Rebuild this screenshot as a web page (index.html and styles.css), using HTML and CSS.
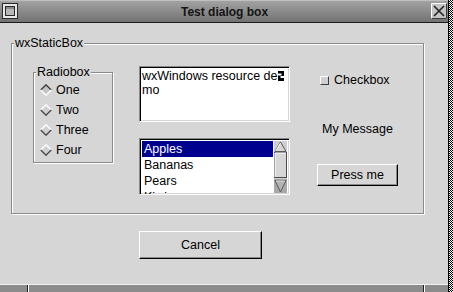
FILE: index.html
```html
<!DOCTYPE html>
<html lang="en">
<head>
  <meta charset="UTF-8" />
  <title>Test dialog box</title>
  <link rel="stylesheet" href="styles.css">
</head>
<body>

  <div class="screen">
    <div class="window">
      <div class="titlebar">
        <svg class="win-icon" width="16" height="16" viewBox="0 0 16 16">
          <rect x="0.5" y="0.5" width="15" height="15" fill="#e8e8e8" stroke="#2a2a2a"/>
          <rect x="3.5" y="3.5" width="9" height="9" fill="#b8b8b8" stroke="#2a2a2a"/>
          <rect x="4" y="4" width="8" height="2" fill="#8a8a8a"/>
        </svg>
        <div class="title">Test dialog box</div>
        <svg class="close" width="16" height="16" viewBox="0 0 16 16">
          <rect x="0" y="0" width="16" height="16" fill="#c4c4c4"/>
          <path d="M0.5 15.5V0.5h15" fill="none" stroke="#fff"/>
          <path d="M15.5 0.5v15H0.5" fill="none" stroke="#3a3a3a"/>
          <path d="M3 3l10 10M13 3L3 13" stroke="#222" stroke-width="1.6"/>
        </svg>
      </div>

      <div class="client">
        <div class="group staticbox">
          <span class="group-label">wxStaticBox</span>
          <div class="controls">

            <div class="group radiobox">
              <span class="group-label">Radiobox</span>
              <div class="radio checked"><svg width="12" height="12" viewBox="0 0 12 12"><path d="M6 1.5L10.5 6 6 10.5 1.5 6z" fill="#c4c4c4"/><path d="M0.8 6L6 0.8 11.2 6" fill="none" stroke="#3c3c3c" stroke-width="1.4"/><path d="M0.8 6L6 11.2 11.2 6" fill="none" stroke="#fff" stroke-width="1.4"/></svg>One</div>
              <div class="radio"><svg width="12" height="12" viewBox="0 0 12 12"><path d="M6 1.5L10.5 6 6 10.5 1.5 6z" fill="#d0d0d0"/><path d="M0.8 6L6 0.8 11.2 6" fill="none" stroke="#fff" stroke-width="1.4"/><path d="M0.8 6L6 11.2 11.2 6" fill="none" stroke="#4a4a4a" stroke-width="1.4"/></svg>Two</div>
              <div class="radio"><svg width="12" height="12" viewBox="0 0 12 12"><path d="M6 1.5L10.5 6 6 10.5 1.5 6z" fill="#d0d0d0"/><path d="M0.8 6L6 0.8 11.2 6" fill="none" stroke="#fff" stroke-width="1.4"/><path d="M0.8 6L6 11.2 11.2 6" fill="none" stroke="#4a4a4a" stroke-width="1.4"/></svg>Three</div>
              <div class="radio"><svg width="12" height="12" viewBox="0 0 12 12"><path d="M6 1.5L10.5 6 6 10.5 1.5 6z" fill="#d0d0d0"/><path d="M0.8 6L6 0.8 11.2 6" fill="none" stroke="#fff" stroke-width="1.4"/><path d="M0.8 6L6 11.2 11.2 6" fill="none" stroke="#4a4a4a" stroke-width="1.4"/></svg>Four</div>
            </div>

            <div class="middle">
              <div class="sunken textbox">
                <div>wxWindows resource de<svg class="caret" width="6" height="10" viewBox="0 0 6 10"><path d="M0 0h6v5H2.5v2H6v3H0V4.5h3.5V2.5H0z" fill="#000"/></svg></div>
                <div>mo</div>
              </div>
              <div class="sunken listbox">
                <div class="rows">
                  <div class="row selected">Apples</div>
                  <div class="row">Bananas</div>
                  <div class="row">Pears</div>
                  <div class="row">Kiwi</div>
                </div>
                <svg class="scrollbar" width="13" height="52" viewBox="0 0 13 52">
                  <rect x="0" y="0" width="13" height="52" fill="#cfcfcf"/>
                  <path d="M6.5 1L12 10.5H1z" fill="#d6d6d6" stroke="#5a5a5a"/>
                  <path d="M1.8 10L6.5 2" stroke="#fff"/>
                  <rect x="0.5" y="11.5" width="12" height="25" fill="#d6d6d6" stroke="#4a4a4a"/>
                  <path d="M1 36V12h11" fill="none" stroke="#fff"/>
                  <rect x="0" y="38" width="13" height="14" fill="#a9a9a9"/>
                  <path d="M1 39.5h11L6.5 51z" fill="#b4b4b4" stroke="#5a5a5a"/>
                  <path d="M2 40h9" stroke="#e6e6e6"/>
                </svg>
              </div>
            </div>

            <div class="right">
              <div class="checkbox"><span class="check-box"></span>Checkbox</div>
              <div class="message">My Message</div>
              <button class="btn press">Press me</button>
            </div>

          </div>
        </div>

        <div class="actions">
          <button class="btn cancel">Cancel</button>
        </div>
      </div>

      <div class="frame-bottom">
        <div class="frame-seg first"></div>
        <div class="frame-seg mid"></div>
        <div class="frame-seg last"></div>
      </div>
    </div>
    <div class="edge"></div>
  </div>

</body>
</html>
```

FILE: styles.css
```css
html, body {
  margin: 0;
  padding: 0;
  background: #d6d6d6;
  font-family: 'Liberation Sans', Arial, sans-serif;
  font-size: 12.5px;
  color: #000;
  overflow: hidden;
}

.screen {
  display: flex;
  width: 453px;
  height: 292px;
}

.window {
  width: 449px;
  height: 292px;
  display: flex;
  flex-direction: column;
  border-right: 1px solid #000;
  box-sizing: border-box;
}

.edge {
  width: 4px;
  height: 292px;
  background: repeating-conic-gradient(#000 0 25%, #fff 0 50%) 0 0 / 2px 2px;
}

/* title bar */

.titlebar {
  height: 23px;
  box-sizing: border-box;
  border-bottom: 1px solid #1c1c1c;
  border-top: 1px solid #c0c0c0;
  background: linear-gradient(#a2a2a2, #727272);
  display: flex;
  align-items: center;
  padding: 0 1px 0 2px;
}

.win-icon, .close {
  flex: none;
  margin-top: -1px;
}

.title {
  flex: 1;
  text-align: center;
  font-weight: bold;
  font-size: 12px;
  color: #141414;
}

/* client area */

.client {
  flex: 1;
  padding: 20px 0 0 11px;
  box-sizing: border-box;
}

.group {
  position: relative;
  border: 1px solid #8a8a8a;
  box-shadow: inset 1px 1px 0 #fff, 1px 1px 0 #fff;
  box-sizing: border-box;
}

.group-label {
  position: absolute;
  top: -8px;
  left: 2px;
  padding: 0 1px;
  line-height: 15px;
  background: #d6d6d6;
}

.staticbox {
  width: 413px;
  height: 171px;
  padding: 22px 0 0 21px;
}

.controls {
  display: flex;
  align-items: flex-start;
}

.radiobox {
  width: 80px;
  margin-top: 6px;
  padding: 7px 0 2px 0;
}

.radio {
  height: 20px;
  display: flex;
  align-items: center;
  gap: 4px;
  padding-left: 6px;
}

.radio svg {
  flex: none;
}

.middle {
  width: 151px;
  margin-left: 26px;
  display: flex;
  flex-direction: column;
  gap: 16px;
}

.sunken {
  background: #fff;
  border: 1px solid;
  border-color: #8a8a8a #fff #fff #8a8a8a;
  box-shadow: inset 1px 1px 0 #000, inset -1px -1px 0 #d6d6d6;
  box-sizing: border-box;
}

.textbox {
  height: 56px;
  padding: 2px 0 0 2px;
  line-height: 14px;
  white-space: nowrap;
}

.caret {
  margin-left: 1px;
  vertical-align: -1px;
}

.listbox {
  height: 57px;
  padding: 1px;
  display: flex;
  overflow: hidden;
}

.rows {
  flex: 1;
  height: 53px;
  overflow: hidden;
  padding: 1px 0 0 1px;
}

.row {
  height: 16px;
  line-height: 16px;
  padding-left: 2px;
}

.row.selected {
  background: #00008f;
  color: #fff;
}

.scrollbar {
  flex: none;
  margin: 1px 1px 0 1px;
}

.right {
  margin-left: 27px;
  display: flex;
  flex-direction: column;
  align-items: flex-start;
}

.checkbox {
  display: flex;
  align-items: center;
  gap: 5px;
  line-height: 15px;
  margin: 7px 0 0 3px;
}

.check-box {
  width: 9px;
  height: 9px;
  box-sizing: border-box;
  border: 1px solid;
  border-color: #fff #3c3c3c #3c3c3c #fff;
  background: #d0d0d0;
}

.message {
  line-height: 15px;
  margin: 34px 0 0 5px;
}

.btn {
  font-family: inherit;
  font-size: 12.5px;
  color: #000;
  background: #d6d6d6;
  border: 1px solid;
  border-color: #fff #000 #000 #fff;
  box-shadow: inset -1px -1px 0 #8a8a8a;
  padding: 0;
  border-radius: 0;
}

.press {
  width: 81px;
  height: 22px;
  margin-top: 27px;
}

.actions {
  display: flex;
  padding: 17px 0 0 128px;
}

.cancel {
  width: 123px;
  height: 28px;
}

/* bottom frame */

.frame-bottom {
  height: 8px;
  display: flex;
  border-top: 1px solid #f0f0f0;
  background: #8c8c8c;
  box-sizing: border-box;
}

.frame-seg.first {
  width: 27px;
}

.frame-seg.mid {
  width: 395px;
  border-left: 1px solid #222;
  box-shadow: inset 1px 0 0 #fff;
}

.frame-seg.last {
  flex: 1;
  border-left: 1px solid #222;
  box-shadow: inset 1px 0 0 #fff;
}
```
